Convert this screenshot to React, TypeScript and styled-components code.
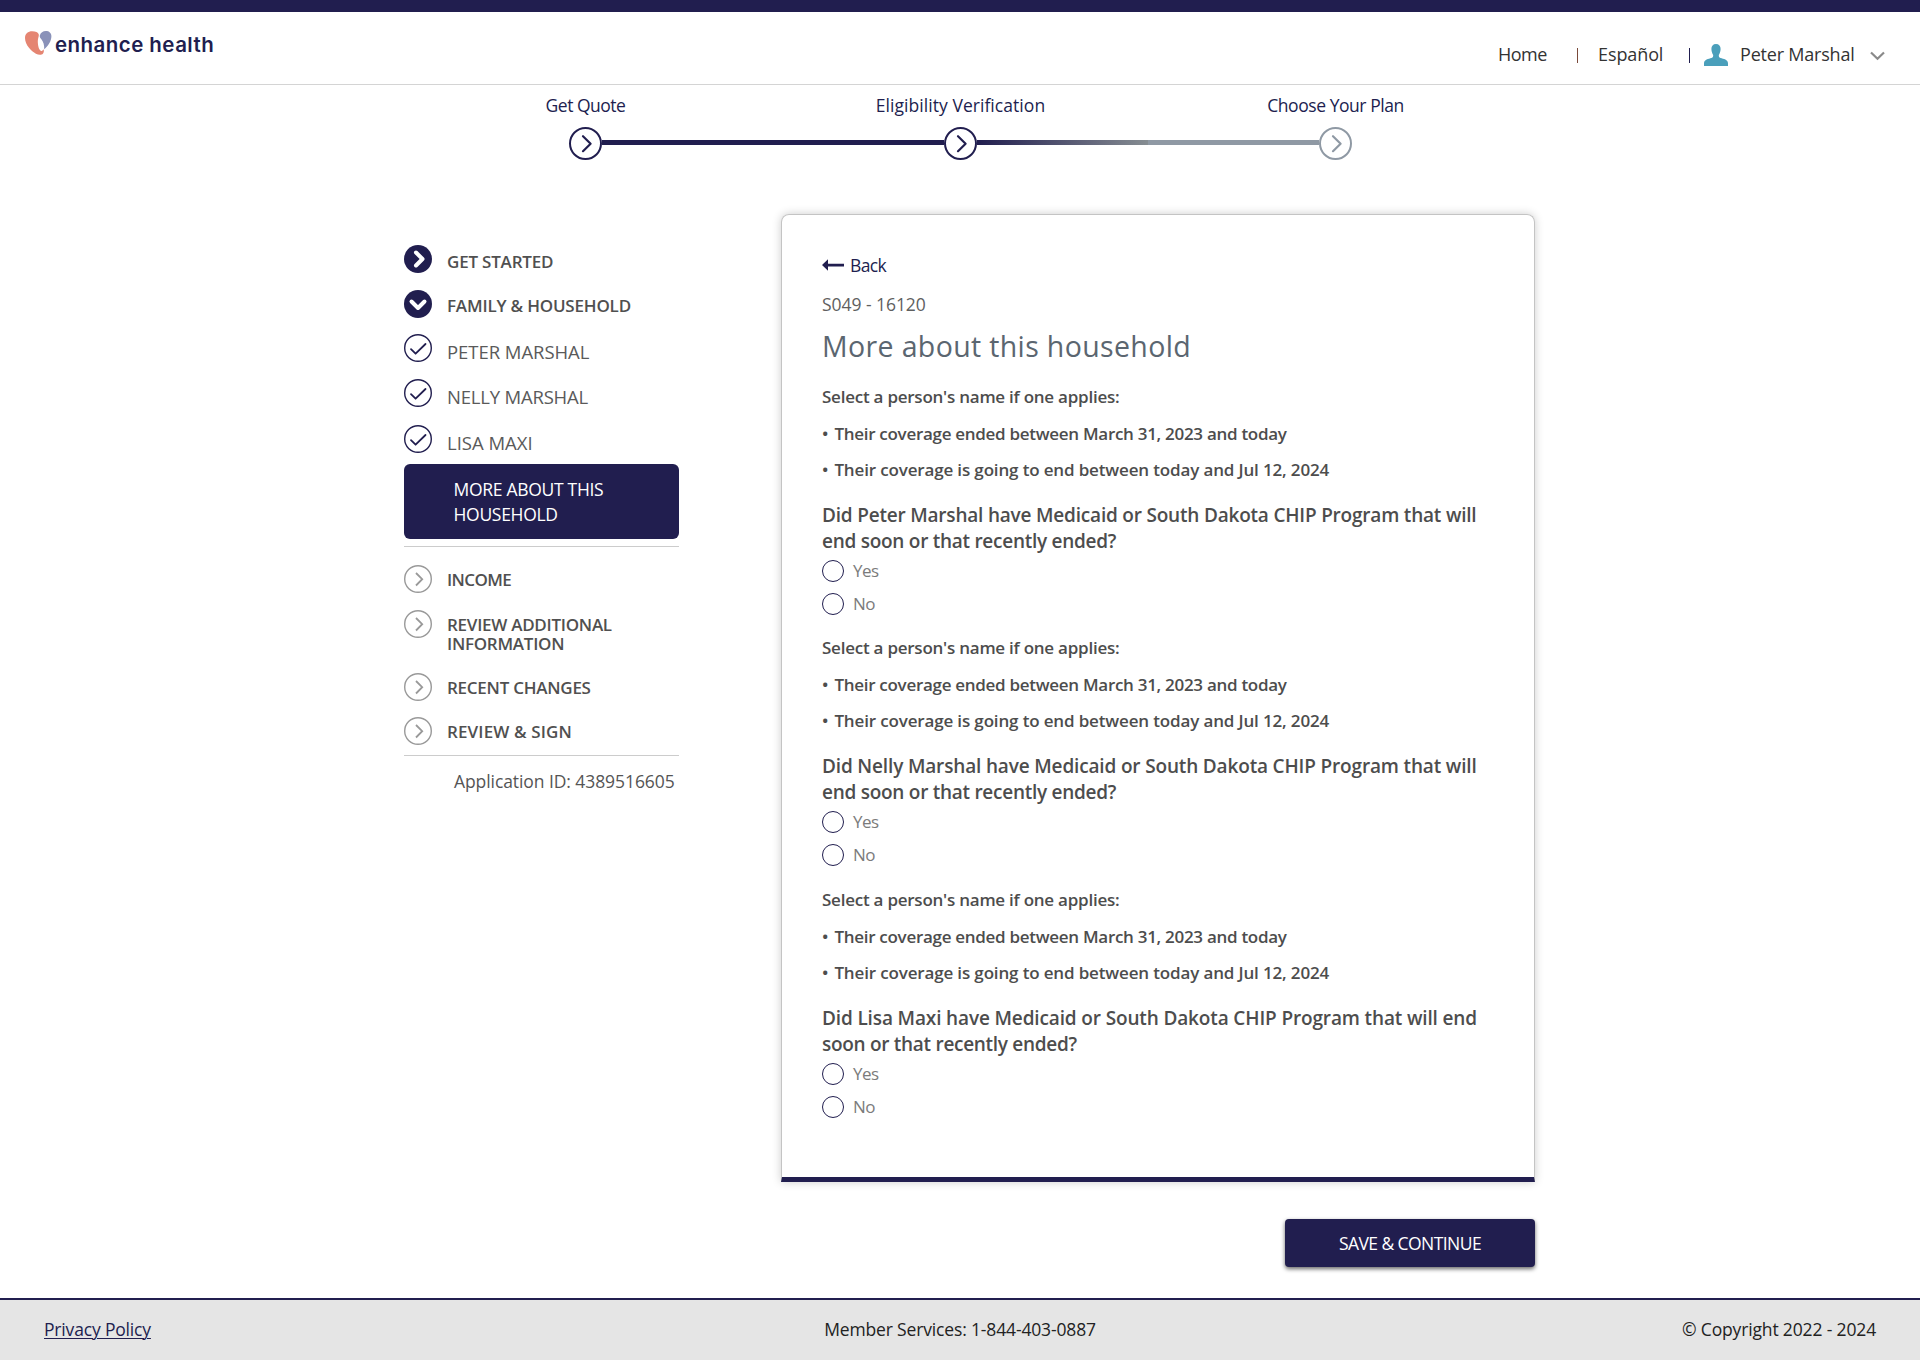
import React from 'react';
import styled, { createGlobalStyle, css } from 'styled-components';

const NAVY = '#211e4f';
const GREY = '#8f99a4';

const GlobalStyle = createGlobalStyle`
  * { box-sizing: border-box; }
  body {
    margin: 0;
    background: #fff;
    color: #4a4a4a;
    font-family: "Open Sans", "Noto Sans", sans-serif;
    font-size: 17.5px;
    line-height: 24px;
  }
`;

const Page = styled.div`
  width: 1920px;
  min-height: 1360px;
  display: flex;
  flex-direction: column;
`;

/* letter spacing, in px, varies from one label to the next */
const Txt = styled.span<{ $ls?: number }>`
  letter-spacing: ${p => p.$ls ?? 0}px;
  white-space: nowrap;
`;

/* ---------- header ---------- */
const Header = styled.header`
  height: 85px;
  border-top: 12px solid ${NAVY};
  border-bottom: 1px solid #d4d4d4;
  display: flex;
  justify-content: space-between;
  align-items: flex-start;
`;
const Brand = styled.div`
  display: flex;
  align-items: flex-start;
  padding: 19px 0 0 25px;
  gap: 3px;
`;
const BrandName = styled.span`
  font-family: Inter, sans-serif;
  font-weight: 600;
  font-size: 20.5px;
  letter-spacing: 0.45px;
  line-height: 28px;
  color: ${NAVY};
`;
const TopNav = styled.nav`
  display: flex;
  width: 422px;
  padding-top: 30px;
  font-size: 18px;
  color: #333;
`;
const NavCell = styled.div<{ $w: number }>`
  width: ${p => p.$w}px;
  white-space: nowrap;
`;
const Bar = styled.div<{ $w: number; $c: string }>`
  width: ${p => p.$w}px;
  padding-top: 6px;
  &::before {
    content: '';
    display: block;
    width: 1px;
    height: 15px;
    background: ${p => p.$c};
  }
`;

/* ---------- progress steps ---------- */
const Steps = styled.div`
  display: grid;
  grid-template-columns: repeat(3, 375px);
  margin-left: 398px;
  padding-top: 8px;
  color: ${NAVY};
`;
const Step = styled.div`
  display: flex;
  flex-direction: column;
  align-items: center;
  gap: 10px;
`;
const Track = styled.div`
  display: grid;
  grid-template-columns: 1fr 33px 1fr;
  width: 100%;
  height: 33px;
`;
const Line = styled.div<{ $bg: string }>`
  height: 5px;
  margin-top: 13px;
  background: ${p => p.$bg};
`;

/* ---------- main ---------- */
const Main = styled.main`
  display: flex;
  gap: 102px;
  padding: 54px 0 0 404px;
`;
const Sidebar = styled.aside`
  width: 275px;
  padding-top: 31px;
`;
const SideItem = styled.div<{ $h: number; $drop: number; $bold?: boolean }>`
  display: flex;
  gap: 15px;
  height: ${p => p.$h}px;
  line-height: 19px;
  ${p =>
    p.$bold
      ? css`
          font-size: 17px;
          font-weight: 600;
          color: #505050;
        `
      : css`
          font-size: 18.5px;
          color: #5a5a5a;
        `}
  > span {
    margin-top: ${p => p.$drop}px;
  }
`;
const Current = styled.div`
  height: 75px;
  margin-bottom: 7px;
  padding: 13px 0 0 49.5px;
  border-radius: 6px;
  background: ${NAVY};
  color: #fff;
  line-height: 25px;
`;
const Divider = styled.div<{ $gap: number }>`
  height: 1px;
  background: #ccc;
  margin-bottom: ${p => p.$gap}px;
`;
const AppId = styled.div`
  padding-left: 50px;
  color: #555;
`;

const Content = styled.div`
  width: 754px;
  display: flex;
  flex-direction: column;
`;
const Card = styled.section`
  height: 968px;
  padding: 38px 40px 0;
  border: 1px solid #c4c4c4;
  border-bottom: 5px solid ${NAVY};
  border-radius: 8px 8px 0 0;
  box-shadow: 0 0 10px rgba(0, 0, 0, 0.2);
`;
const Back = styled.a`
  display: flex;
  align-items: center;
  gap: 5px;
  color: ${NAVY};
`;
const Code = styled.div`
  margin-top: 15px;
  color: #5f5f5f;
`;
const Title = styled.h1`
  margin: 12px 0 21px;
  font-size: 28.5px;
  line-height: 36px;
  font-weight: 400;
  letter-spacing: 0.36px;
  color: #5b6670;
`;
const Block = styled.div`
  margin-bottom: 21.4px;
`;
const Note = styled.p<{ $mt: number }>`
  margin: ${p => p.$mt}px 0 0;
  font-size: 17px;
  font-weight: 600;
  color: #4d4d4d;
`;
const Bullet = styled.span`
  margin-right: 6px;
`;
const Question = styled.h2`
  margin: 20px 0 6px;
  font-size: 19px;
  font-weight: 600;
  line-height: 26px;
  color: #4d4d4d;
`;
const Option = styled.label`
  display: flex;
  align-items: center;
  gap: 9px;
  height: 22px;
  color: #7b7b7b;
  font-size: 17px;
  & + & {
    margin-top: 11px;
  }
`;
const Radio = styled.input.attrs({ type: 'radio' })`
  appearance: none;
  width: 22px;
  height: 22px;
  margin: 0;
  border: 1px solid ${NAVY};
  border-radius: 50%;
`;
const SaveButton = styled.button`
  align-self: flex-end;
  width: 250px;
  height: 48px;
  margin-top: 37px;
  padding: 0 0 1px;
  border: 0;
  border-radius: 4px;
  background: ${NAVY};
  color: #fff;
  font: inherit;
  box-shadow: 0 2px 4px rgba(0, 0, 0, 0.6);
`;

/* ---------- footer ---------- */
const Footer = styled.footer`
  display: grid;
  grid-template-columns: 1fr auto 1fr;
  height: 62px;
  margin-top: 31px;
  padding: 17px 44px 0;
  border-top: 2px solid ${NAVY};
  background: #e5e5e5;
  color: #222;
`;
const Policy = styled.a`
  color: ${NAVY};
  text-decoration: underline;
  text-decoration-thickness: 1px;
  text-underline-offset: 2px;
`;
const Right = styled.div`
  text-align: right;
`;

/* ---------- icons ---------- */
const Heart = () => (
  <svg width="27" height="25" viewBox="0 0 27 25">
    <path d="M0 7C0 2.500 3 .2 7.200.2c3.300 0 6 .9 6.600 3.300.3 1.600-.9 3.500-1 6.500 0 4.500 1 8.800 3.200 9.900 1.400.5 2-.8 2.500-1.600.7 1.500.4 3.300-.6 4.400-1.500 1.600-4.500 1.300-7 0C6.500 20.300 0 14 0 7z" fill="#e58572" />
    <path d="M14.800 4.500C15.600 1.500 18 0 20.800 0c3.300 0 5.600 2 5.600 5.200 0 4.800-3.200 9.800-7.200 13 .2-4.200-.8-7.500-3-10.200-.9-1.100-1.700-2-1.400-3.500z" fill="#8a92b9" />
  </svg>
);
const Person = () => (
  <svg width="24" height="24" viewBox="0 0 24 24">
    <path d="M12 2c3 0 4.700 2 4.600 5-.1 3-1 4.600-1.800 6 0 1.500.2 2.600 1.700 3.100 3 1 7.500 1.400 7.500 5.400V24H0v-2.500c0-4 4.500-4.400 7.500-5.400 1.500-.5 1.700-1.600 1.700-3.100-.8-1.400-1.700-3-1.800-6C7.300 4 9 2 12 2z" fill="#4a9fbb" />
  </svg>
);
const Caret = () => (
  <svg width="15" height="10" viewBox="0 0 15 10">
    <path d="M1 1.500l6.500 6.200L14 1.500" fill="none" stroke="#8a8a8a" strokeWidth="2.200" />
  </svg>
);
const StepIcon = ({ color }: { color: string }) => (
  <svg width="33" height="33" viewBox="0 0 33 33">
    <circle cx="16.500" cy="16.500" r="15.500" fill="#fff" stroke={color} strokeWidth="2" />
    <path d="M14 9.200l7.600 7.500-7.600 7.500" fill="none" stroke={color} strokeWidth="2.200" strokeLinecap="round" strokeLinejoin="round" />
  </svg>
);
type Kind = 'solidRight' | 'solidDown' | 'check' | 'right';
const SideIcon = ({ kind }: { kind: Kind }) => {
  const solid = kind === 'solidRight' || kind === 'solidDown';
  const color = kind === 'right' ? '#999' : NAVY;
  const d = {
    solidRight: 'M12 7.500l6.500 6.500-6.500 6.500',
    solidDown: 'M7.500 11.500l6.500 6.500 6.500-6.500',
    check: 'M7 15.200l4.600 4.500L21.500 10',
    right: 'M12 8l6.200 6.200L12 20.500',
  }[kind];
  return (
    <svg width="28" height="28" viewBox="0 0 28 28">
      <circle cx="14" cy="14" r={solid ? 14 : 13.3} fill={solid ? NAVY : '#fff'} stroke={solid ? 'none' : color} strokeWidth="1.400" />
      <path d={d} fill="none" stroke={solid ? '#fff' : color} strokeWidth={solid ? 4 : 1.8} strokeLinecap={kind === 'right' ? 'butt' : 'round'} strokeLinejoin={kind === 'right' ? 'miter' : 'round'} />
    </svg>
  );
};
const BackArrow = () => (
  <svg width="23" height="12" viewBox="0 0 23 12">
    <path d="M0 6L6 .2V4.700h16v2.800H6V11.800z" fill={NAVY} />
  </svg>
);

/* ---------- data ---------- */
const people = [
  { name: 'Peter Marshal', lines: [['Did Peter Marshal have Medicaid or South Dakota CHIP Program that will', -0.2], ['end soon or that recently ended?', -0.27]] },
  { name: 'Nelly Marshal', lines: [['Did Nelly Marshal have Medicaid or South Dakota CHIP Program that will', -0.16], ['end soon or that recently ended?', -0.27]] },
  { name: 'Lisa Maxi', lines: [['Did Lisa Maxi have Medicaid or South Dakota CHIP Program that will end', -0.14], ['soon or that recently ended?', -0.29]] },
] as { name: string; lines: [string, number][] }[];

export default function App() {
  return (
    <Page>
      <GlobalStyle />
      <Header>
        <Brand>
          <Heart />
          <BrandName>enhance health</BrandName>
        </Brand>
        <TopNav>
          <NavCell $w={79}><Txt $ls={-0.5}>Home</Txt></NavCell>
          <Bar $w={21} $c="#7a4a3a" />
          <NavCell $w={91}><Txt $ls={-0.1}>Español</Txt></NavCell>
          <Bar $w={15} $c={NAVY} />
          <NavCell $w={36}><Person /></NavCell>
          <NavCell $w={130}><Txt $ls={-0.2}>Peter Marshal</Txt></NavCell>
          <NavCell $w={15}><Caret /></NavCell>
        </TopNav>
      </Header>

      <Steps>
        <Step>
          <Txt $ls={-0.5}>Get Quote</Txt>
          <Track><span /><StepIcon color={NAVY} /><Line $bg={NAVY} /></Track>
        </Step>
        <Step>
          <Txt $ls={0.05}>Eligibility Verification</Txt>
          <Track>
            <Line $bg={NAVY} />
            <StepIcon color={NAVY} />
            <Line $bg={`linear-gradient(90deg, ${NAVY}, #868d92)`} />
          </Track>
        </Step>
        <Step>
          <Txt $ls={-0.45}>Choose Your Plan</Txt>
          <Track><Line $bg={GREY} /><StepIcon color={GREY} /><span /></Track>
        </Step>
      </Steps>

      <Main>
        <Sidebar>
          <SideItem $h={45} $drop={7} $bold><SideIcon kind="solidRight" /><Txt $ls={-0.2}>GET STARTED</Txt></SideItem>
          <SideItem $h={44} $drop={6} $bold><SideIcon kind="solidDown" /><Txt $ls={-0.19}>FAMILY &amp; HOUSEHOLD</Txt></SideItem>
          <SideItem $h={45} $drop={8}><SideIcon kind="check" /><Txt $ls={-0.05}>PETER MARSHAL</Txt></SideItem>
          <SideItem $h={46} $drop={8}><SideIcon kind="check" /><Txt $ls={-0.2}>NELLY MARSHAL</Txt></SideItem>
          <SideItem $h={39} $drop={8}><SideIcon kind="check" /><Txt $ls={0}>LISA MAXI</Txt></SideItem>
          <Current><Txt $ls={-0.3}>MORE ABOUT THIS<br />HOUSEHOLD</Txt></Current>
          <Divider $gap={18} />
          <SideItem $h={45} $drop={5} $bold><SideIcon kind="right" /><Txt $ls={-0.6}>INCOME</Txt></SideItem>
          <SideItem $h={63} $drop={5} $bold><SideIcon kind="right" /><Txt $ls={-0.27}>REVIEW ADDITIONAL<br />INFORMATION</Txt></SideItem>
          <SideItem $h={44} $drop={5} $bold><SideIcon kind="right" /><Txt $ls={-0.25}>RECENT CHANGES</Txt></SideItem>
          <SideItem $h={38} $drop={5} $bold><SideIcon kind="right" /><Txt $ls={0.13}>REVIEW &amp; SIGN</Txt></SideItem>
          <Divider $gap={13} />
          <AppId><Txt $ls={-0.08}>Application ID: 4389516605</Txt></AppId>
        </Sidebar>

        <Content>
          <Card>
            <Back><BackArrow /><Txt $ls={-0.6}>Back</Txt></Back>
            <Code><Txt $ls={-0.05}>S049 - 16120</Txt></Code>
            <Title>More about this household</Title>
            {people.map(p => (
              <Block key={p.name}>
                <Note $mt={0}><Txt $ls={-0.24}>Select a person's name if one applies:</Txt></Note>
                <Note $mt={13}><Bullet>•</Bullet><Txt $ls={-0.29}>Their coverage ended between March 31, 2023 and today</Txt></Note>
                <Note $mt={12}><Bullet>•</Bullet><Txt $ls={-0.15}>Their coverage is going to end between today and Jul 12, 2024</Txt></Note>
                <Question>
                  <Txt $ls={p.lines[0][1]}>{p.lines[0][0]}</Txt><br />
                  <Txt $ls={p.lines[1][1]}>{p.lines[1][0]}</Txt>
                </Question>
                <Option><Radio name={p.name} /><Txt $ls={-0.5}>Yes</Txt></Option>
                <Option><Radio name={p.name} /><Txt $ls={-0.5}>No</Txt></Option>
              </Block>
            ))}
          </Card>
          <SaveButton><Txt $ls={-0.57}>SAVE &amp; CONTINUE</Txt></SaveButton>
        </Content>
      </Main>

      <Footer>
        <div><Policy href="#"><Txt $ls={-0.17}>Privacy Policy</Txt></Policy></div>
        <Txt $ls={-0.15}>Member Services: 1-844-403-0887</Txt>
        <Right><Txt $ls={-0.15}>© Copyright 2022 - 2024</Txt></Right>
      </Footer>
    </Page>
  );
}
